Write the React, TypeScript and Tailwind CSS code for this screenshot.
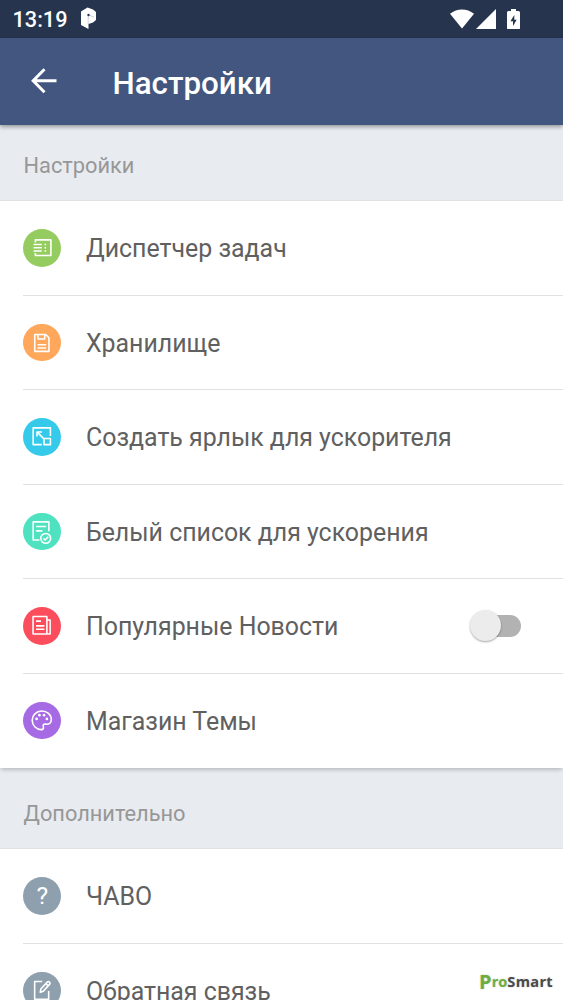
import type { ReactNode } from "react";

type Item = {
  label: string;
  color: string;
  icon: ReactNode;
  toggle?: boolean;
};

const mainItems: Item[] = [
  {
    label: "Диспетчер задач",
    color: "bg-[#94cc5f]",
    icon: (
      <>
        <path d="M12.5 14V11.3H28.3V27.2H12.5V24.5" />
        <path d="M10.7 16H19M10.7 19.3H19M10.7 22.6H19M21.8 16h1.6M21.8 19.3h1.6M21.8 22.6h1.6" />
      </>
    ),
  },
  {
    label: "Хранилище",
    color: "bg-[#ffa85c]",
    icon: (
      <>
        <path d="M11.9 11H23L26.3 14.3V28H11.9Z" />
        <path d="M15.2 11V15.5H22V11M14.7 21.3H23.5M14.7 24.6H23.5" />
      </>
    ),
  },
  {
    label: "Создать ярлык для ускорителя",
    color: "bg-[#35c9ea]",
    icon: (
      <>
        <path d="M19 27.3H10.3V10.3H27.8V18.5" />
        <path d="M14.2 19V14.4H19.2M14.4 14.6L20.7 20.9" />
        <path d="M21.3 21H27.8V27.3H21.3Z" />
      </>
    ),
  },
  {
    label: "Белый список для ускорения",
    color: "bg-[#4ee2c0]",
    icon: (
      <>
        <path d="M16.7 27.7H10.3V9.3H26.2V18.7" />
        <path d="M13.3 14H23.5M13.3 18.4H19.7" />
        <circle cx="23" cy="26" r="5" />
        <path d="M20.7 26L22.4 27.7L25.6 24.4" />
      </>
    ),
  },
  {
    label: "Популярные Новости",
    color: "bg-[#fb4d5c]",
    icon: (
      <>
        <path d="M10.2 10H24.2V27.6H10.2ZM24.2 13.5H27.5V27.6H24.2" />
        <path d="M13.2 14.6H18.2M13.2 19.4H21.7M13.2 22.9H21.7" />
      </>
    ),
    toggle: true,
  },
  {
    label: "Магазин Темы",
    color: "bg-[#a66ae4]",
    icon: (
      <>
        <path d="M19 9.5C13.3 9.5 9.3 13.8 9.3 18.8C9.3 24.3 13.8 28.3 18.5 28.3C20.5 28.3 21.2 27 20.6 25.4C20 23.5 20.9 22.4 23 22.7C26.3 23.2 28.7 21.6 28.7 18.3C28.7 13 24.3 9.5 19 9.5Z" />
        <g fill="white" stroke="none">
          <circle cx="13.8" cy="17.4" r="1.4" />
          <circle cx="16.6" cy="13.6" r="1.4" />
          <circle cx="21.3" cy="13.6" r="1.4" />
          <circle cx="24.2" cy="17.4" r="1.4" />
        </g>
      </>
    ),
  },
];

const extraItems: Item[] = [
  {
    label: "ЧАВО",
    color: "bg-[#8e9fad]",
    icon: (
      <text x="19.5" y="28" textAnchor="middle" fontSize="25" fill="white" stroke="none">
        ?
      </text>
    ),
  },
  {
    label: "Обратная связь",
    color: "bg-[#8e9fad]",
    icon: (
      <>
        <path d="M19.5 10H11.8V28H26V19.5" />
        <path d="M17.5 20.8L18.2 17.3L24.8 10.3C26 9.2 28.2 11.3 27.1 12.6L20.6 19.7ZM23.2 12L25.4 14.2" />
      </>
    ),
  },
];

function StatusBar() {
  return (
    <div className="flex h-[37.5px] shrink-0 items-center bg-[#26344e] pl-[12.5px] pr-[43.5px] text-white">
      <span className="w-[67.5px] pt-[2px] text-[21.7px] font-medium leading-none">13:19</span>
      <svg className="h-[23px] w-[17px]" viewBox="0 0 17 23" fill="white">
        <path d="M1 4.5L7.5 0.5L13 2.5L16 5V13L13 15.5L8.5 17V22L1 18Z" />
        <path d="M8.2 8V17M8.5 8L14 10" stroke="#a9b1be" strokeWidth="0.6" />
        <circle cx="8.5" cy="8" r="1.2" fill="#26344e" />
      </svg>
      <div className="ml-auto flex items-center">
        <svg className="h-[20px] w-[24px]" viewBox="0 0 24 20" fill="white">
          <path d="M0 4.7C7 -1 17 -1 24 4.7L12 19.5Z" />
        </svg>
        <svg className="ml-[2px] h-[20px] w-[20px]" viewBox="0 0 20 20" fill="white">
          <path d="M20 0V20H0Z" />
        </svg>
        <svg className="ml-[10.5px] h-[20.5px] w-[13px]" viewBox="0 0 13 20.5">
          <path
            d="M4 0H9V2H11.5Q13 2 13 3.5V19Q13 20.5 11.5 20.5H1.5Q0 20.5 0 19V3.5Q0 2 1.5 2H4Z"
            fill="white"
          />
          <path d="M7.3 6L3.4 12.2H6V17L9.7 10.8H7.3Z" fill="#26344e" />
        </svg>
      </div>
    </div>
  );
}

function SectionTitle({ children, className }: { children: ReactNode; className: string }) {
  return (
    <div
      className={`flex shrink-0 items-center border-b border-[#dfe1e4] bg-[#e8ebf0] pl-[23.5px] text-[21.8px] text-[#979797] ${className}`}
    >
      {children}
    </div>
  );
}

function Row({ item }: { item: Item }) {
  return (
    <div className="group h-[94.5px] shrink-0 bg-white pl-[23.3px]">
      <div className="flex h-full items-center border-b border-[#e1e1e1] pr-[42px] group-last:border-transparent">
        <div className={`size-[37.5px] shrink-0 rounded-full ${item.color}`}>
          <svg
            className="size-full"
            viewBox="0 0.3 38 38"
            fill="none"
            stroke="white"
            strokeWidth="1.6"
            strokeLinejoin="round"
          >
            {item.icon}
          </svg>
        </div>
        <span className="ml-[25.2px] whitespace-nowrap pt-[4px] text-[24.9px] leading-none text-[#606060]">
          {item.label}
        </span>
        {item.toggle && (
          <button className="ml-auto flex h-[22px] w-[50px] items-center rounded-full bg-[#b2b2b2]">
            <span className="-ml-[1px] size-[31px] shrink-0 rounded-full bg-[#ececec] shadow-[0_1px_2px_rgba(0,0,0,0.35)]" />
          </button>
        )}
      </div>
    </div>
  );
}

export default function App() {
  return (
    <div className="relative flex h-[1000px] w-[563px] flex-col overflow-hidden bg-white font-[Roboto,sans-serif]">
      <StatusBar />
      <header className="z-10 flex h-[87.5px] shrink-0 items-center bg-[#42567f] pl-[31px] text-white shadow-[0_2px_4px_rgba(0,0,0,0.35)]">
        <svg className="h-[26px] w-[26px]" viewBox="0 0 26 26" fill="none" stroke="white" strokeWidth="3">
          <path d="M25.5 12.7H2.5M13.5 1.3L2.2 12.7L13.5 24.2" />
        </svg>
        <h1 className="ml-[55.5px] pt-[4px] text-[31.3px] font-medium leading-none">Настройки</h1>
      </header>

      <SectionTitle className="h-[76px] pt-[7px]">Настройки</SectionTitle>
      <div className="z-10 shrink-0 shadow-[0_3px_4px_-1px_rgba(0,0,0,0.2)]">
        {mainItems.map((item) => (
          <Row key={item.label} item={item} />
        ))}
      </div>

      <SectionTitle className="h-[81px] pt-[12px]">Дополнительно</SectionTitle>
      <div className="shrink-0">
        {extraItems.map((item) => (
          <Row key={item.label} item={item} />
        ))}
      </div>

      <div className="absolute bottom-[10px] right-[10px] flex items-baseline font-['Open_Sans',sans-serif] text-[14.6px] font-bold leading-none [text-shadow:0_0_2px_#ccc]">
        <span className="relative top-[2px] text-[20px] text-[#6fae3c]">P</span>
        <span className="text-[#6fae3c]">ro</span>
        <span className="tracking-[0.3px] text-[#4a4a4a]">Smart</span>
      </div>
    </div>
  );
}
